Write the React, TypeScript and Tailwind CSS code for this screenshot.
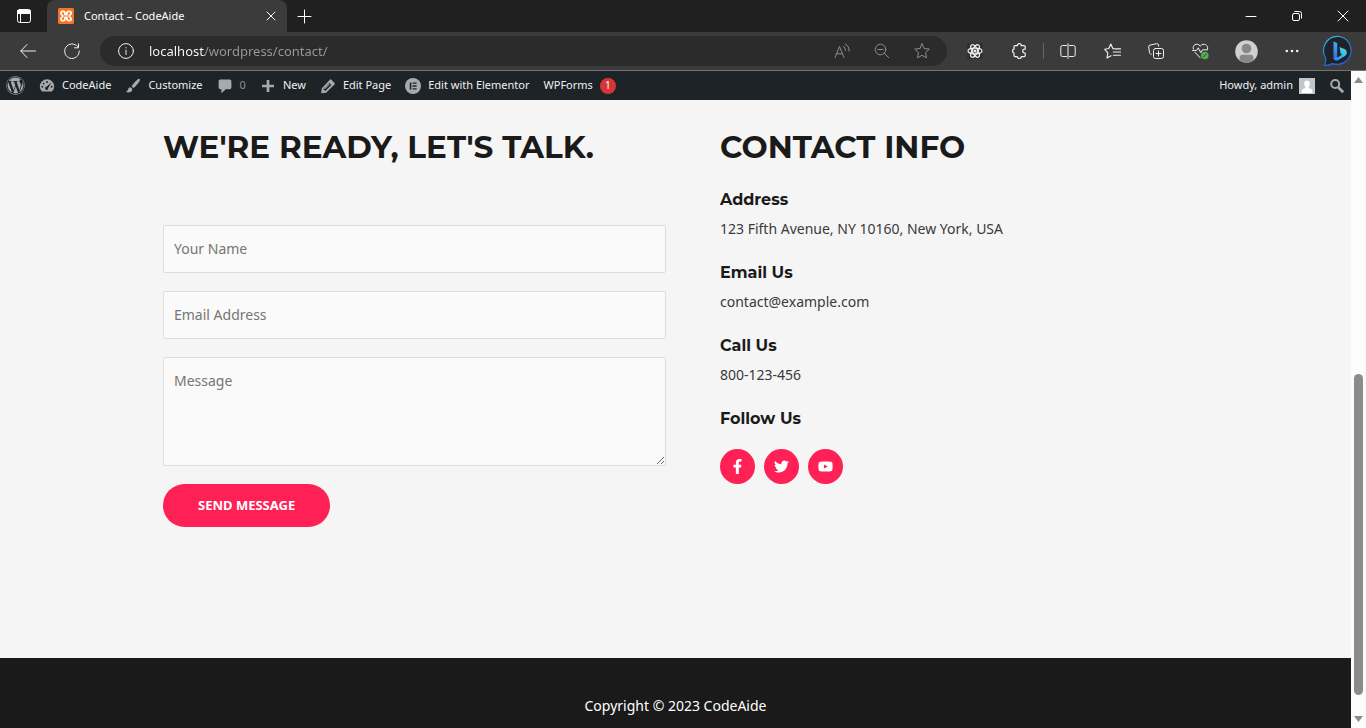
import type { ReactNode } from "react";
import { FaFacebookF, FaTwitter, FaYoutube, FaWordpress } from "react-icons/fa";

function Stroke({ size = 16, box = 16, width = 1, className = "", children }: { size?: number; box?: number; width?: number; className?: string; children: ReactNode }) {
  return (
    <svg width={size} height={size} viewBox={`0 0 ${box} ${box}`} fill="none" stroke="currentColor" strokeWidth={width} strokeLinecap="round" strokeLinejoin="round" className={`shrink-0 ${className}`} aria-hidden="true">
      {children}
    </svg>
  );
}

function TitleBar() {
  return (
    <header className="flex h-8 shrink-0 items-stretch bg-[#202020] text-white">
      <button aria-label="Tab actions" className="flex w-[47px] items-center justify-center">
        <Stroke>
          <rect x="1.5" y="1.5" width="13" height="13" rx="2" />
          <path d="M2 3h12M2 5h12" strokeWidth="2" />
          <path d="M4.500 5v9" />
        </Stroke>
      </button>
      <div className="flex w-60 items-center rounded-t-lg bg-[#3b3b3b] pl-[11px] pr-2">
        <svg width="16" height="16" viewBox="0 0 16 16" fill="none" aria-hidden="true">
          <rect width="16" height="16" rx="1.500" fill="#f37623" />
          <path d="M5.200 3.300H4.600a1.700 1.700 0 0 0-1.300 2.900L5 8 3.300 9.800a1.700 1.700 0 0 0 1.300 2.900h.6c1.200 0 1.800-.8 1.800-1.900V9.300h2v1.500c0 1.100.6 1.900 1.800 1.900h.6a1.700 1.700 0 0 0 1.300-2.900L11 8l1.700-1.800a1.700 1.700 0 0 0-1.300-2.900h-.6C9.600 3.300 9 4.100 9 5.200v1.500H7V5.200c0-1.100-.6-1.900-1.800-1.900z" stroke="#fff" strokeWidth="1.700" strokeLinejoin="round" />
        </svg>
        <span className="ml-2.5 flex-1 text-[11px]">Contact – CodeAide</span>
        <button aria-label="Close tab" className="flex size-4 items-center justify-center">
          <Stroke size={10} box={10}>
            <path d="M1 1l8 8M9 1L1 9" />
          </Stroke>
        </button>
      </div>
      <button aria-label="New tab" className="flex w-[35px] items-center justify-center">
        <Stroke size={15} box={15}>
          <path d="M7.500 1v13M1 7.500h13" />
        </Stroke>
      </button>
      <div className="flex-1" />
      <button aria-label="Minimize" className="flex w-[46px] items-center justify-center">
        <Stroke size={12} box={12}>
          <path d="M1 6.500h10" />
        </Stroke>
      </button>
      <button aria-label="Restore" className="flex w-[46px] items-center justify-center">
        <Stroke size={12} box={12}>
          <rect x="1.500" y="3.500" width="7" height="7" rx="1.500" />
          <path d="M3.800 1.500H8.500a2 2 0 0 1 2 2v4.700" />
        </Stroke>
      </button>
      <button aria-label="Close" className="flex w-[46px] items-center justify-center">
        <Stroke size={12} box={12}>
          <path d="M1 1l10 10M11 1L1 11" />
        </Stroke>
      </button>
    </header>
  );
}

function ToolButton({ label, wide = false, children }: { label: string; wide?: boolean; children: ReactNode }) {
  return (
    <button aria-label={label} className={`flex shrink-0 items-center justify-center ${wide ? "w-12" : "w-11"}`}>
      {children}
    </button>
  );
}

function PillButton({ label, children }: { label: string; children: ReactNode }) {
  return (
    <button aria-label={label} className="flex w-10 shrink-0 items-center justify-center text-[#8e8e8e]">
      {children}
    </button>
  );
}

function BingLogo() {
  return (
    <svg width="32" height="32" viewBox="0 0 32 32" aria-hidden="true">
      <defs>
        <linearGradient id="bingRing" x1="0" y1="0" x2="0.4" y2="1">
          <stop offset="0" stopColor="#2fc4e8" />
          <stop offset="0.6" stopColor="#1b7fe0" />
          <stop offset="1" stopColor="#2f5be8" />
        </linearGradient>
        <linearGradient id="bingStem" x1="0" y1="0" x2="0" y2="1">
          <stop offset="0" stopColor="#37b3f5" />
          <stop offset="1" stopColor="#3566e8" />
        </linearGradient>
        <linearGradient id="bingBowl" x1="1" y1="0" x2="0" y2="1">
          <stop offset="0" stopColor="#4fe0d0" />
          <stop offset="0.5" stopColor="#35b5f0" />
          <stop offset="1" stopColor="#2f7df0" />
        </linearGradient>
      </defs>
      <path d="M17 1.500A14 14 0 1 1 10.500 28.600Q6 30.800 2.800 30.300Q2 30 2.800 29Q4.300 26.500 3.500 22.500A14 14 0 0 1 17 1.500Z" fill="#1f2329" stroke="url(#bingRing)" strokeWidth="1.200" />
      <path d="M11.500 6.500l3.700 1.500v14.300l-1.200 2.400-2.500-1.700z" fill="url(#bingStem)" />
      <path d="M17.500 12l5 2c2.500 1.200 3.300 4.600.8 6.700L16 25.200c-2 1-4.500 0-4.500-2.100l4.500-.9 4-2.600-1.400-.8z" fill="url(#bingBowl)" />
    </svg>
  );
}

function Toolbar() {
  return (
    <div className="flex h-[39px] shrink-0 items-stretch border-b border-[#757575] bg-[#3b3b3b] pl-1.5 pr-1 text-[#f0f0f0]">
      <ToolButton label="Back">
        <Stroke>
          <path d="M15.500 8H.8M7 1.500L.8 8 7 14.500" />
        </Stroke>
      </ToolButton>
      <ToolButton label="Refresh">
        <Stroke>
          <path d="M13.600 3.500A7.300 7.300 0 1 0 15.300 8M14.500.8v4h-4" />
        </Stroke>
      </ToolButton>
      <div className="mx-1.5 my-1 flex min-w-0 flex-1 items-stretch rounded-full bg-[#2b2b2b] pl-[18px] pr-[5px]">
        <button aria-label="Site information" className="flex shrink-0 items-center">
          <Stroke>
            <circle cx="8" cy="8" r="7.400" />
            <path d="M8 7.200v4.200M8 4.600v.3" />
          </Stroke>
        </button>
        <input
          aria-label="Address"
          defaultValue="localhost/wordpress/contact/"
          className="ml-[15px] min-w-0 flex-1 bg-linear-[90deg,#ffffff_56px,#9a9a9a_56px] bg-clip-text pt-0.5 text-[13px] text-transparent outline-none"
        />
        <PillButton label="Read aloud">
          <Stroke>
            <path d="M1 14.500L5.500 3.500 10 14.500M2.600 10.800h5.800M9.500 3.200q2 1.500 2 4.300M11.500 1q3.700 2.300 3.700 7" />
          </Stroke>
        </PillButton>
        <PillButton label="Zoom">
          <Stroke>
            <circle cx="6.500" cy="6.500" r="5.300" />
            <path d="M4 6.500h5M10.400 10.400l4.400 4.400" />
          </Stroke>
        </PillButton>
        <PillButton label="Add to favorites">
          <Stroke>
            <path d="M8 .8l2.200 4.700 5.100.6-3.800 3.500 1 5.200L8 12.300l-4.500 2.500 1-5.200L.7 6.100l5.100-.6z" />
          </Stroke>
        </PillButton>
      </div>
      <ToolButton label="React developer tools">
        <span className="flex size-4 items-center justify-center bg-[#303030]">
          <Stroke width={1.2}>
            <ellipse cx="8" cy="8" rx="7" ry="2.800" />
            <ellipse cx="8" cy="8" rx="7" ry="2.800" transform="rotate(60 8 8)" />
            <ellipse cx="8" cy="8" rx="7" ry="2.800" transform="rotate(120 8 8)" />
            <circle cx="8" cy="8" r="1" fill="currentColor" />
          </Stroke>
        </span>
      </ToolButton>
      <ToolButton label="Extensions">
        <Stroke width={1.2}>
          <path d="M4 2.700h2.300a2 2 0 0 1 4 0h2.900a1 1 0 0 1 1 1v2.500h-.6a1.900 1.900 0 0 0 0 3.800h.6v2.600a1 1 0 0 1-1 1h-2.900a2 2 0 0 1-4 0H4a1 1 0 0 1-1-1V10a1.950 1.950 0 0 1 0-3.800V3.700a1 1 0 0 1 1-1z" />
        </Stroke>
      </ToolButton>
      <div className="flex w-[5px] items-center justify-center">
        <span className="h-4 w-px bg-[#666]" />
      </div>
      <ToolButton label="Split screen">
        <Stroke>
          <path d="M6.500 2.500h-4a1.700 1.700 0 0 0-1.700 1.700v7.600a1.700 1.700 0 0 0 1.700 1.700h4M9.500 2.500h4a1.700 1.700 0 0 1 1.700 1.700v7.600a1.700 1.700 0 0 1-1.700 1.700h-4M8 .6v14.800" />
        </Stroke>
      </ToolButton>
      <ToolButton label="Favorites">
        <Stroke size={17} box={16} width={1.1}>
          <path d="M9.500 5.400L8.400 5.300 6.400 1 4.500 5.200.7 5.900l2.900 3.300-.8 4.900 3.800-2.100M10.200 5.500h5.300M8.800 8.500h6.700M8.800 11.500h6.700" />
        </Stroke>
      </ToolButton>
      <ToolButton label="Collections">
        <Stroke>
          <rect x="5.500" y="5.500" width="10" height="10" rx="2" />
          <path d="M10.500 8v5M8 10.500h5M3.300 11.200l-.8-.3a1.500 1.500 0 0 1-1-1.300L.7 4a1.700 1.700 0 0 1 1.400-1.900L8.500.7a1.700 1.700 0 0 1 2 1.300l.2 1.200" />
        </Stroke>
      </ToolButton>
      <ToolButton label="Browser essentials">
        <svg width="17" height="17" viewBox="0 0 17 17" fill="none" stroke="currentColor" strokeLinecap="round" strokeLinejoin="round" aria-hidden="true">
          <path d="M1.300 6C-.2 2 5-.7 8.300 3 11.500-.7 16.800 2 15.600 6M3 9.300l5.200 5.500M.6 7.500h4l1.600-2.700 2.600 4.800 1.700-2.800h5" />
          <circle cx="12.800" cy="12.500" r="3.800" fill="#4caf50" stroke="none" />
          <path d="M11.300 14l3-3" stroke="#234f25" />
        </svg>
      </ToolButton>
      <ToolButton label="Profile" wide>
        <svg width="23" height="23" viewBox="0 0 23 23" aria-hidden="true">
          <circle cx="11.500" cy="11.500" r="11.300" fill="#d2d0ce" />
          <circle cx="11.500" cy="8.500" r="4.800" fill="#8a8886" />
          <path d="M4.500 20.300V18q0-3.300 3.300-3.300h7.400q3.300 0 3.300 3.300v2.300a11.300 11.300 0 0 1-14 0z" fill="#8a8886" />
        </svg>
      </ToolButton>
      <ToolButton label="Settings and more">
        <svg width="16" height="16" viewBox="0 0 16 16" fill="currentColor" aria-hidden="true">
          <circle cx="2.800" cy="8" r="1.300" />
          <circle cx="8" cy="8" r="1.300" />
          <circle cx="13.200" cy="8" r="1.300" />
        </svg>
      </ToolButton>
      <ToolButton label="Discover" wide>
        <BingLogo />
      </ToolButton>
    </div>
  );
}

function Dash({ children }: { children: ReactNode }) {
  return (
    <svg width="16" height="16" viewBox="0 0 20 20" className="shrink-0 fill-[#a7aaad]" aria-hidden="true">
      {children}
    </svg>
  );
}

function BarLink({ icon, children }: { icon?: ReactNode; children: ReactNode }) {
  return (
    <a href="#" className="flex items-center gap-[7px] whitespace-nowrap">
      {icon}
      {children}
    </a>
  );
}

function AdminBar() {
  return (
    <nav className="flex h-[29px] shrink-0 items-center justify-between bg-[#1d2327] px-1.5 text-[11px] text-[#f0f0f1]">
      <div className="flex items-center gap-3.5">
        <a href="#" aria-label="About WordPress">
          <FaWordpress size={19} color="#a7aaad" />
        </a>
        <BarLink
          icon={
            <Dash>
              <path d="M3.760 17h12.480A8.980 8.980 0 1 0 3.760 17z" />
              <g fill="#1d2327">
                <circle cx="10" cy="5" r="1.200" />
                <circle cx="5.800" cy="7" r="1.200" />
                <circle cx="4.200" cy="11" r="1.200" />
                <circle cx="15.800" cy="11" r="1.200" />
                <path d="M15.500 5.500l-4 7a2 2 0 1 1-2.200-1.600z" />
              </g>
            </Dash>
          }
        >
          CodeAide
        </BarLink>
        <BarLink
          icon={
            <Dash>
              <path d="M18.300 1.300c-.8-.7-2 0-3 .9-2.500 2.300-5.800 5.600-7.100 8.200l2.200 2.200c2.500-1.400 5.400-5.200 7.300-8 .7-1 1.400-2.500.6-3.300zM7 11.500c-2.200 0-2.900 1.500-3.400 3.300-.4 1.400-1.200 2.300-2.600 2.500 2.400 1.700 7.800 1.400 8.300-3.500z" />
            </Dash>
          }
        >
          Customize
        </BarLink>
        <BarLink
          icon={
            <Dash>
              <path d="M4 2h12q2 0 2 2v8q0 2-2 2h-5l-5.500 5V14H4q-2 0-2-2V4q0-2 2-2z" />
            </Dash>
          }
        >
          <span className="text-[#8c8f94]">0</span>
        </BarLink>
        <BarLink
          icon={
            <Dash>
              <path d="M8.300 2.500h3.400v5.800h5.800v3.400h-5.800v5.800H8.300v-5.800H2.500V8.300h5.800z" />
            </Dash>
          }
        >
          New
        </BarLink>
        <BarLink
          icon={
            <Dash>
              <path fillRule="evenodd" d="M13.900 1.900l4.200 4.200c.6.600.6 1.300 0 1.900L7.700 18.300 1.500 19.200l.8-6.500L12.600 2c.4-.4.900-.4 1.300-.1zM4 13.800l2.600 2.600 7.600-7.600-2.600-2.700z" />
              <path d="M5 13.200l6-6 .9.900-6 6z" />
            </Dash>
          }
        >
          Edit Page
        </BarLink>
        <BarLink
          icon={
            <Dash>
              <circle cx="10" cy="10" r="10" />
              <path d="M6 5.500h2v9H6zM9.500 5.500h5v1.800h-5zM9.500 9.100h5v1.800h-5zM9.500 12.700h5v1.800h-5z" fill="#1d2327" />
            </Dash>
          }
        >
          Edit with Elementor
        </BarLink>
        <BarLink>
          WPForms
          <span className="flex size-4 items-center justify-center rounded-full bg-[#d63638] text-[10px] text-white">1</span>
        </BarLink>
      </div>
      <div className="flex items-center gap-3.5">
        <a href="#" className="flex items-center gap-1.5">
          Howdy, admin
          <svg width="16" height="16" viewBox="0 0 16 16" aria-hidden="true">
            <rect width="16" height="16" fill="#c5c5c5" />
            <path d="M8 2.500c2 0 3 1.500 2.800 3.400C10.700 7.500 9.800 8.500 9.500 9c0 1 .6 1.400 2 1.800 1.500.5 2 1.400 2 4.200h-11c0-2.800.5-3.700 2-4.200 1.400-.4 2-.8 2-1.800-.3-.5-1.200-1.500-1.300-3.100C5 4 6 2.500 8 2.500z" fill="#fff" />
          </svg>
        </a>
        <button aria-label="Search">
          <svg width="16" height="16" viewBox="0 0 16 16" fill="none" stroke="#a7aaad" aria-hidden="true">
            <circle cx="6.200" cy="6" r="4" strokeWidth="2" />
            <path d="M9.200 9.200l5 5" strokeWidth="2.800" />
          </svg>
        </button>
      </div>
    </nav>
  );
}

const FIELD = "block w-full rounded-xs border border-[#dddddd] bg-[#fafafa] px-2.5 text-[14px] text-[#333] placeholder:text-[#757575] outline-none";

function ContactForm() {
  return (
    <section className="min-w-0">
      <h2 className="font-['Montserrat','Inter',sans-serif] text-[31px] leading-10 font-bold whitespace-nowrap text-[#1a1a1a]">WE'RE READY, LET'S TALK.</h2>
      <form className="mt-[58px] flex flex-col items-start gap-[18px]">
        <input aria-label="Your Name" type="text" placeholder="Your Name" className={`${FIELD} h-12 pb-0.5`} />
        <input aria-label="Email Address" type="email" placeholder="Email Address" className={`${FIELD} h-12 pb-0.5`} />
        <textarea aria-label="Message" placeholder="Message" className={`${FIELD} h-[109px] resize-y py-3`} />
        <button type="submit" className="rounded-full bg-[#ff2056] px-[35px] py-3 text-[13px] leading-[19px] font-bold text-white">SEND MESSAGE</button>
      </form>
    </section>
  );
}

const DETAILS = [
  { label: "Address", value: "123 Fifth Avenue, NY 10160, New York, USA" },
  { label: "Email Us", value: "contact@example.com" },
  { label: "Call Us", value: "800-123-456" },
];

const SOCIAL = [
  { label: "Facebook", Icon: FaFacebookF },
  { label: "Twitter", Icon: FaTwitter },
  { label: "YouTube", Icon: FaYoutube },
];

const LABEL = "font-['Montserrat','Inter',sans-serif] text-[16px] leading-7 font-bold text-[#1a1a1a]";

function ContactInfo() {
  return (
    <section className="min-w-0">
      <h2 className="font-['Montserrat','Inter',sans-serif] text-[31px] leading-10 font-bold whitespace-nowrap text-[#1a1a1a]">CONTACT INFO</h2>
      <div className="mt-[19px] flex flex-col gap-4">
        {DETAILS.map(({ label, value }) => (
          <div key={label} className="flex flex-col">
            <h3 className={LABEL}>{label}</h3>
            <p className="text-[14px] leading-[29px] text-[#3a3a3a]">{value}</p>
          </div>
        ))}
        <div>
          <h3 className={LABEL}>Follow Us</h3>
          <div className="mt-4 flex gap-[9px]">
            {SOCIAL.map(({ label, Icon }) => (
              <a key={label} href="#" aria-label={label} className="flex size-[35px] items-center justify-center rounded-full bg-[#ff2056] text-white">
                <Icon size={15} />
              </a>
            ))}
          </div>
        </div>
      </div>
    </section>
  );
}

function ScrollBar() {
  return (
    <div className="flex w-[15px] shrink-0 flex-col items-center bg-[#fcfcfc] py-1.5" aria-hidden="true">
      <svg width="9" height="6" viewBox="0 0 9 6" fill="#8b8b8b">
        <path d="M4.500 0L9 6H0z" />
      </svg>
      <div className="grow-[291]" />
      <div className="w-[9px] grow-[321] rounded-full bg-[#8b8b8b]" />
      <div className="grow-[21]" />
      <svg width="9" height="6" viewBox="0 0 9 6" fill="#8b8b8b">
        <path d="M0 0h9L4.500 6z" />
      </svg>
    </div>
  );
}

export default function App() {
  return (
    <div className="flex h-screen flex-col overflow-hidden font-['Noto_Sans',sans-serif]">
      <TitleBar />
      <Toolbar />
      <div className="flex min-h-0 flex-1">
        <div className="flex min-w-0 flex-1 flex-col bg-[#f5f5f5]">
          <AdminBar />
          <main className="flex-1 px-6 pt-[27px]">
            <div className="mx-auto grid max-w-[1025px] grid-cols-[503fr_468fr] gap-[54px]">
              <ContactForm />
              <ContactInfo />
            </div>
          </main>
          <footer className="bg-[#1a1a1a] pt-9 pb-2.5 text-center text-[14px] leading-6 text-white">Copyright © 2023 CodeAide</footer>
        </div>
        <ScrollBar />
      </div>
    </div>
  );
}
